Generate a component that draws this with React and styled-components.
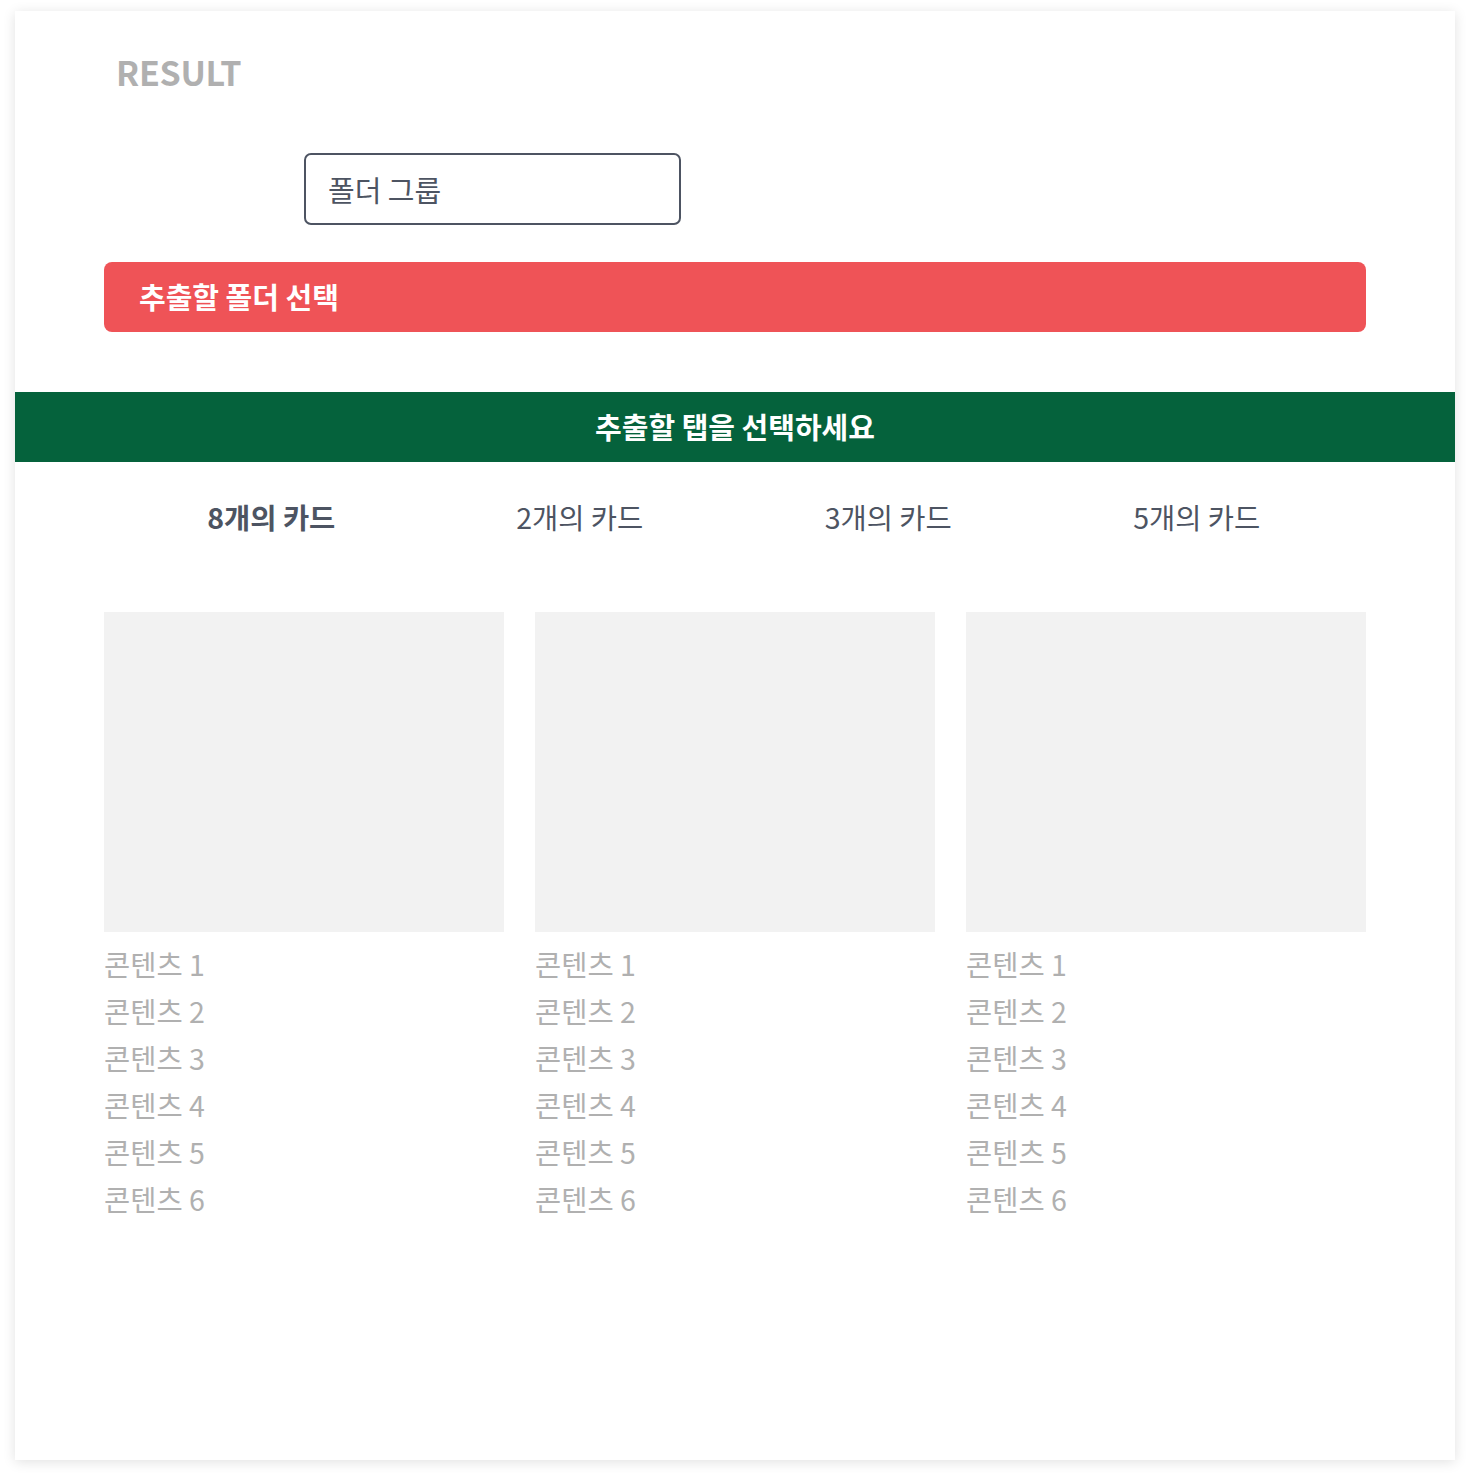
import React, { useState } from "react";
import styled, { createGlobalStyle } from "styled-components";

const Global = createGlobalStyle`
  html, body { margin: 0; padding: 0; background: #ffffff; }
  body { font-family: "Noto Sans CJK KR", "Noto Sans", sans-serif; }
  * { box-sizing: border-box; }
`;

const Page = styled.div`
  padding: 11px 15px 19px;
`;

const Frame = styled.div`
  width: 1440px;
  height: 1449px;
  background: #fff;
  box-shadow: 0 2px 12px rgba(0, 0, 0, 0.12);
  display: flex;
  flex-direction: column;
`;

const Top = styled.div`
  padding: 38px 89px 0;
  display: flex;
  flex-direction: column;
`;

const Title = styled.h1`
  margin: 0 0 0 12px;
  font-size: 34px;
  font-weight: 600;
  color: #b0b0b0;
  line-height: 46px;
  letter-spacing: -0.3px;
`;

const InputRow = styled.div`
  margin-top: 58px;
  padding-left: 200px;
`;

const Input = styled.div`
  width: 377px;
  height: 72px;
  border: 2px solid #4d5462;
  border-radius: 7px;
  display: flex;
  align-items: center;
  padding-left: 22px;
  font-size: 29px;
  color: #4d5462;
`;

const RedButton = styled.button`
  margin-top: 37px;
  height: 70px;
  border: none;
  border-radius: 8px;
  background: #ef5357;
  color: #fff;
  font-family: inherit;
  font-size: 29px;
  font-weight: 700;
  text-align: left;
  padding: 0 0 2px 35px;
`;

const Banner = styled.div`
  margin-top: 60px;
  height: 70px;
  background: #05623c;
  color: #fff;
  font-size: 29px;
  font-weight: 700;
  display: flex;
  align-items: center;
  justify-content: center;
  padding-bottom: 2px;
`;

const Tabs = styled.div`
  display: grid;
  grid-template-columns: repeat(4, 1fr);
  padding: 0 104px 2px 102px;
  height: 110px;
`;

const Tab = styled.button`
  border: none;
  background: none;
  font-family: inherit;
  font-size: 28.5px;
  color: #4d5462;
  font-weight: ${(p) => (p.$active ? 700 : 400)};
  cursor: pointer;
  padding: 0;
`;

const Cards = styled.div`
  margin-top: 40px;
  padding: 0 89px;
  display: grid;
  grid-template-columns: repeat(3, 400px);
  column-gap: 31px;
`;

const Card = styled.div`
  display: flex;
  flex-direction: column;
`;

const Thumb = styled.div`
  height: 320px;
  background: #f2f2f2;
`;

const List = styled.ul`
  list-style: none;
  margin: 8px 0 0;
  padding: 0;
`;

const Item = styled.li`
  font-size: 28.5px;
  line-height: 47px;
  color: #b0b0b0;
`;

const tabs = ["8개의 카드", "2개의 카드", "3개의 카드", "5개의 카드"];
const items = [1, 2, 3, 4, 5, 6];

export default function App() {
  const [active, setActive] = useState(0);
  return (
    <>
      <Global />
      <Page>
        <Frame>
          <Top>
            <Title>RESULT</Title>
            <InputRow>
              <Input>폴더 그룹</Input>
            </InputRow>
            <RedButton>추출할 폴더 선택</RedButton>
          </Top>
          <Banner>추출할 탭을 선택하세요</Banner>
          <Tabs>
            {tabs.map((t, i) => (
              <Tab key={t} $active={i === active} onClick={() => setActive(i)}>
                {t}
              </Tab>
            ))}
          </Tabs>
          <Cards>
            {[0, 1, 2].map((c) => (
              <Card key={c}>
                <Thumb />
                <List>
                  {items.map((n) => (
                    <Item key={n}>콘텐츠 {n}</Item>
                  ))}
                </List>
              </Card>
            ))}
          </Cards>
        </Frame>
      </Page>
    </>
  );
}
